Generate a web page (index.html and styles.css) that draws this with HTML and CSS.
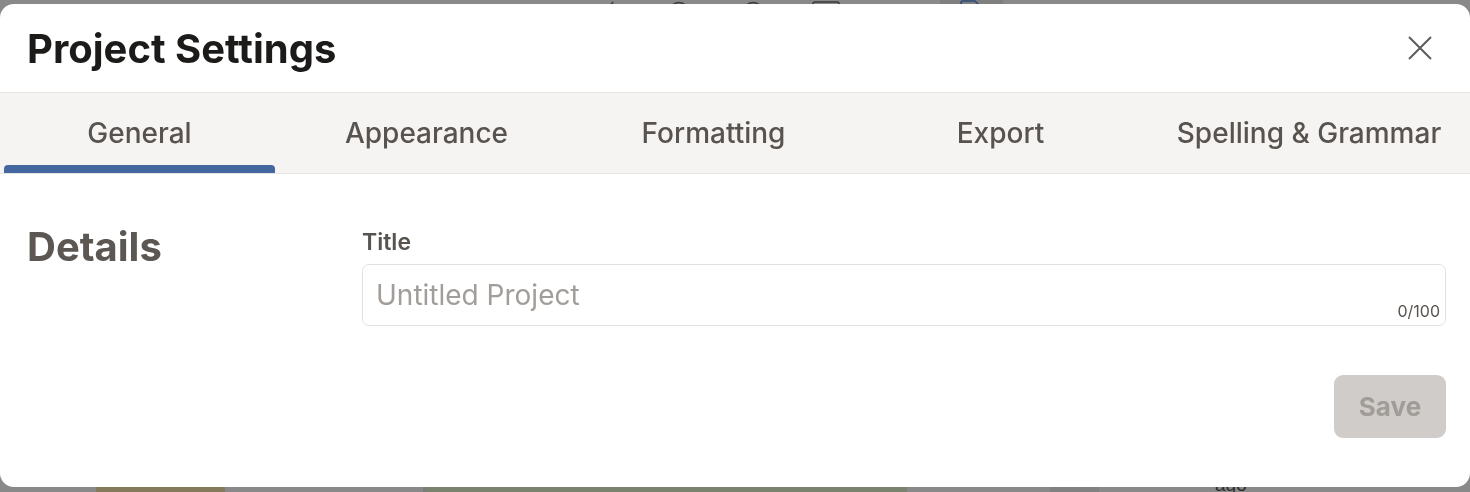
FILE: index.html
```html
<!DOCTYPE html>
<html lang="en">
<head>
<meta charset="utf-8">
<title>Project Settings</title>
<link rel="stylesheet" href="styles.css">
</head>
<body>
  <div class="page">
    <div class="toolbar">
      <svg class="tool tool-pen" width="14" height="14" viewBox="0 0 14 14"><path d="M2 13 L10 2" stroke="#3a3a3a" stroke-width="1.6" fill="none"/></svg>
      <svg class="tool tool-c1" width="22" height="22" viewBox="0 0 22 22"><circle cx="11" cy="11" r="9.5" stroke="#3a3a3a" stroke-width="1.6" fill="none"/></svg>
      <svg class="tool tool-c2" width="22" height="22" viewBox="0 0 22 22"><circle cx="11" cy="11" r="9.5" stroke="#3a3a3a" stroke-width="1.6" fill="none"/></svg>
      <svg class="tool tool-box" width="28" height="24" viewBox="0 0 28 24"><rect x="1" y="1" width="26" height="22" rx="2" stroke="#3a3a3a" stroke-width="1.6" fill="none"/></svg>
      <div class="tool-active">
        <svg width="26" height="20" viewBox="0 0 26 20"><path d="M2 10 V3 Q2 1 4 1 H16 L24 9" stroke="#2f4a78" stroke-width="1.6" fill="none"/></svg>
      </div>
    </div>
    <div class="page-fill"></div>
    <div class="page-bottom">
      <span class="card-tan"></span>
      <span class="card-green"></span>
      <span class="card-dark"></span>
      <span class="ago">ago</span>
    </div>
  </div>

  <div class="modal">
    <header class="modal-head">
      <h1 class="modal-title">Project Settings</h1>
      <button class="close" aria-label="Close">
        <svg width="26" height="26" viewBox="0 0 26 26"><path d="M2 2 L24 24 M24 2 L2 24" stroke="#5b5b5b" stroke-width="2" fill="none"/></svg>
      </button>
    </header>

    <nav class="tabs">
      <div class="tab active">General</div>
      <div class="tab">Appearance</div>
      <div class="tab">Formatting</div>
      <div class="tab">Export</div>
      <div class="tab tab-last">Spelling &amp; Grammar</div>
    </nav>

    <section class="body">
      <h2 class="section-title">Details</h2>
      <div class="form">
        <label class="field-label">Title</label>
        <div class="input">
          <span class="placeholder">Untitled Project</span>
          <span class="counter">0/100</span>
        </div>
        <div class="actions">
          <button class="save">Save</button>
        </div>
      </div>
    </section>
  </div>
</body>
</html>
```

FILE: styles.css
```css
* {
  box-sizing: border-box;
}

html, body {
  margin: 0;
  padding: 0;
  height: 100%;
  overflow: hidden;
}

body {
  background: #898989;
  font-family: "Inter", "Noto Sans", sans-serif;
}

/* dimmed page behind the dialog */
.page {
  display: flex;
  flex-direction: column;
  height: 100%;
}

.toolbar {
  display: flex;
  align-items: flex-start;
  height: 30px;
  padding-left: 603px;
}

.tool {
  margin-top: 1px;
  flex: none;
}

.tool-pen { margin-top: 0; }
.tool-c1 { margin-left: 51px; }
.tool-c2 { margin-left: 52px; }
.tool-box { margin-left: 48px; margin-top: 1px; }

.tool-active {
  margin-left: 100px;
  width: 63px;
  height: 30px;
  background: #7f7f7f;
  display: flex;
  justify-content: center;
}

.page-fill {
  flex: 1;
}

.page-bottom {
  display: flex;
  align-items: flex-start;
  height: 10px;
  padding-left: 96px;
}

.card-tan {
  width: 129px;
  height: 10px;
  background: #857b5c;
}

.card-green {
  margin-left: 198px;
  width: 484px;
  height: 10px;
  background: #79836d;
  border-left: 3px solid #7c7c7c;
}

.card-dark {
  margin-left: 143px;
  width: 49px;
  height: 10px;
  background: #818181;
}

.ago {
  margin-left: 116px;
  margin-top: -6px;
  font-family: "Liberation Sans", sans-serif;
  font-size: 19px;
  line-height: 18px;
  color: #2c2c2c;
}

/* dialog */
.modal {
  position: fixed;
  top: 4px;
  left: 0;
  right: 0;
  height: 483px;
  background: #ffffff;
  border-radius: 14px;
  overflow: hidden;
  display: flex;
  flex-direction: column;
}

.modal-head {
  display: flex;
  align-items: center;
  justify-content: space-between;
  height: 89px;
  padding: 0 37px 0 27px;
  border-bottom: 1.5px solid #e7e5e2;
}

.modal-title {
  margin: 0;
  font-size: 40px;
  font-weight: 700;
  color: #1c1b1a;
  line-height: 48px;
  padding-top: 1px;
}

.close {
  border: 0;
  background: none;
  padding: 0;
  width: 26px;
  height: 26px;
  display: flex;
}

.tabs {
  display: flex;
  gap: 16px;
  height: 81px;
  padding-left: 4px;
  background: #f5f4f2;
  border-bottom: 1.5px solid #e7e5e2;
}

.tab {
  width: 271px;
  flex: none;
  display: flex;
  align-items: center;
  justify-content: center;
  font-size: 28px;
  font-weight: 500;
  color: #58534f;
  position: relative;
}

.tab-last {
  flex: 1;
  width: auto;
  padding-right: 4px;
}

.tab.active::after {
  content: "";
  position: absolute;
  left: 0;
  right: 0;
  bottom: 0;
  height: 8px;
  background: #44679f;
  border-radius: 4px 4px 0 0;
}

.body {
  display: flex;
  padding: 50px 24px 0 27px;
}

.section-title {
  margin: 0;
  width: 335px;
  flex: none;
  font-size: 40px;
  font-weight: 700;
  color: #5c5753;
  line-height: 46px;
}

.form {
  flex: 1;
  display: flex;
  flex-direction: column;
}

.field-label {
  font-size: 23px;
  font-weight: 600;
  color: #58534f;
  line-height: 28px;
  margin-top: 4px;
  margin-bottom: 8px;
}

.input {
  height: 62px;
  border: 1.5px solid #e3e0dc;
  border-radius: 7px;
  position: relative;
  display: flex;
  align-items: center;
  padding-left: 13px;
  padding-bottom: 1px;
}

.placeholder {
  font-size: 28px;
  color: #a29d98;
}

.counter {
  position: absolute;
  right: 5px;
  bottom: 4px;
  font-size: 16px;
  color: #58534f;
}

.actions {
  display: flex;
  justify-content: flex-end;
  margin-top: 49px;
}

.save {
  width: 112px;
  height: 63px;
  border: 0;
  border-radius: 9px;
  background: #d0ccc9;
  color: #a19c98;
  font-family: "Inter", "Noto Sans", sans-serif;
  font-size: 26px;
  font-weight: 700;
}
```
